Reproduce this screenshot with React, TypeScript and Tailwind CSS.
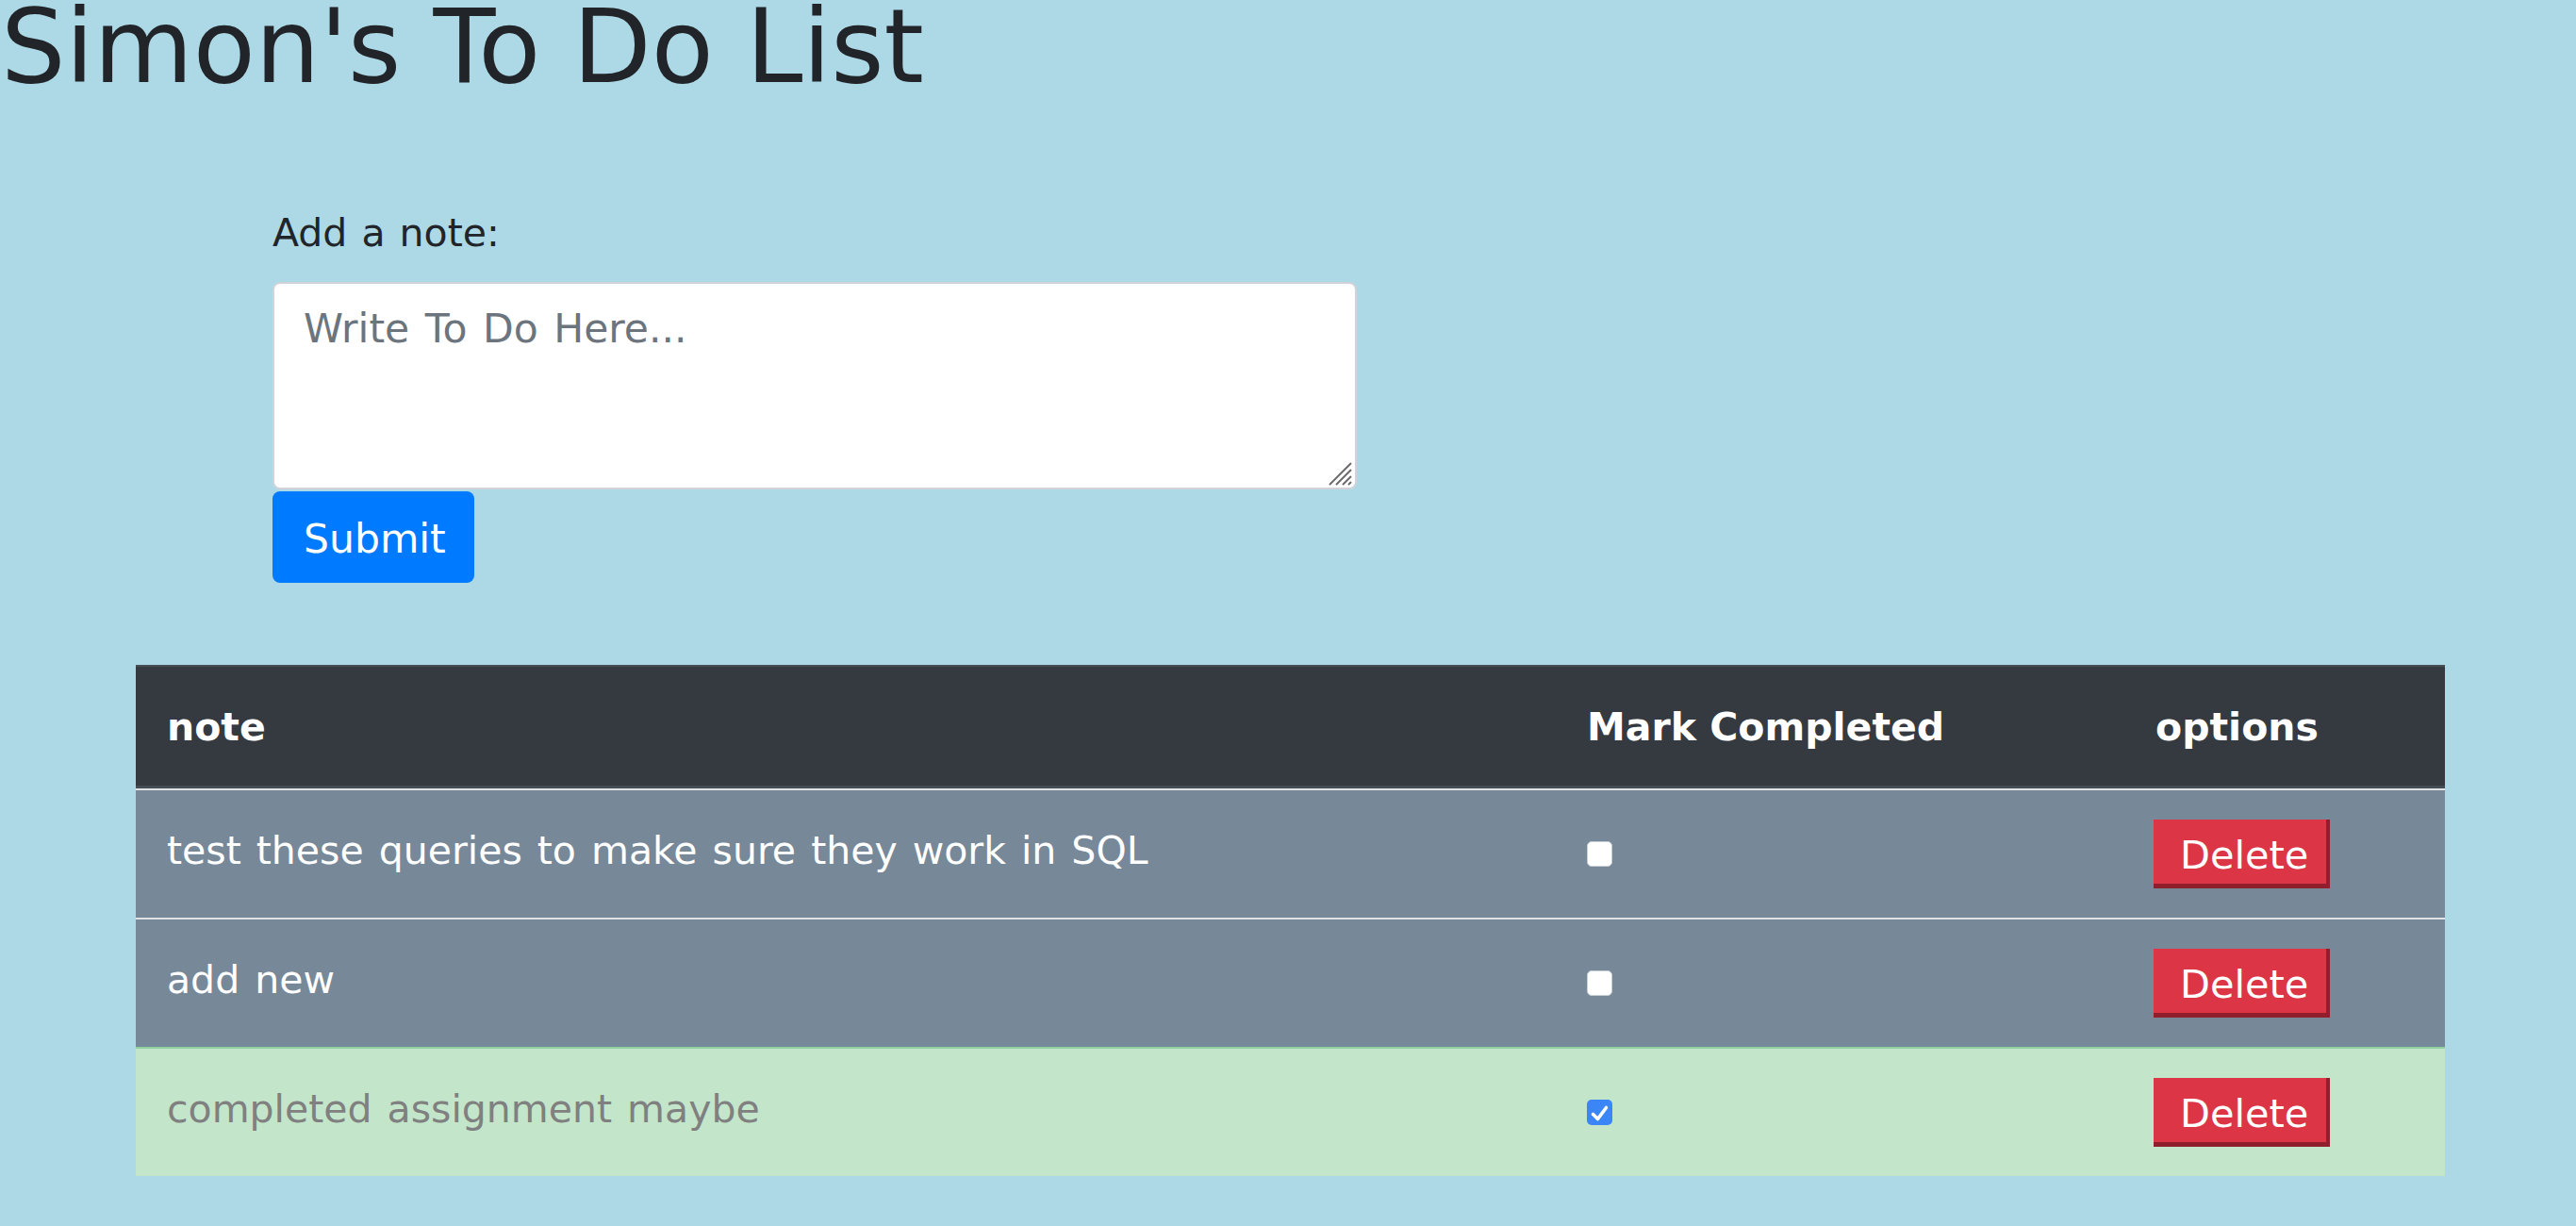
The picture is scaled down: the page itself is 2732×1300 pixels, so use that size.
import { useState } from "react";

interface Todo {
  id: number;
  note: string;
  done: boolean;
}

const FONT = "font-['DejaVu_Sans',sans-serif]";

const INITIAL: Todo[] = [
  { id: 1, note: "test these queries to make sure they work in SQL", done: false },
  { id: 2, note: "add new", done: false },
  { id: 3, note: "completed assignment maybe", done: true },
];

function Check({ checked, onToggle }: { checked: boolean; onToggle: () => void }) {
  return (
    <button
      type="button"
      onClick={onToggle}
      aria-pressed={checked}
      className={
        checked
          ? "flex h-[27px] w-[27px] items-center justify-center rounded-[5px] bg-[#3b86f7]"
          : "flex h-[27px] w-[27px] items-center justify-center rounded-[5px] border border-[#c9ced4] bg-white"
      }
    >
      {checked && (
        <svg width="27" height="27" viewBox="0 0 27 27" fill="none">
          <path
            d="M6.5 15.5 L11.5 20.5 L20.5 8.5"
            stroke="#ffffff"
            strokeWidth="3.6"
            strokeLinecap="round"
            strokeLinejoin="round"
          />
        </svg>
      )}
    </button>
  );
}

function Row({ todo, onToggle }: { todo: Todo; onToggle: () => void }) {
  const rowBg = todo.done
    ? "border-t-2 border-[#8fd19e] bg-[#c3e6cb] text-[#808080]"
    : "border-t-2 border-[#dee2e6] bg-[#778899] text-white";
  return (
    <div className={`grid h-[137px] grid-cols-[1507px_601px_1fr] items-center ${rowBg}`}>
      <div className="px-[33px] pb-[6px] [word-spacing:3px]">{todo.note}</div>
      <div className="px-[32px]">
        <Check checked={todo.done} onToggle={onToggle} />
      </div>
      <div className="px-[32px]">
        <button
          type="button"
          className="block w-[187px] border-t-0 border-l-0 border-r-[4px] border-b-[5px] border-[#8f1f2c] bg-[#dc3545] pt-[13px] pb-[5px] pl-[28px] text-left text-[41.5px] leading-[50px] text-white"
        >
          Delete
        </button>
      </div>
    </div>
  );
}

export default function App() {
  const [todos, setTodos] = useState<Todo[]>(INITIAL);
  const [draft, setDraft] = useState("");

  const toggle = (id: number) =>
    setTodos((list) => list.map((t) => (t.id === id ? { ...t, done: !t.done } : t)));

  return (
    <div className={`h-[1300px] w-full overflow-hidden bg-[#add8e6] text-[41px] leading-[63px] text-[#212529] ${FONT}`}>
      <h1 className="h-[100px] pl-[1px] text-[108px] leading-[99px] font-normal">Simon's To Do List</h1>

      <form className="ml-[289px] mt-[116px] w-[1150px]" onSubmit={(e) => e.preventDefault()}>
        <label className="mb-[20px] block [word-spacing:2px]">Add a note:</label>
        <div className="relative">
          <textarea
            value={draft}
            onChange={(e) => setDraft(e.target.value)}
            placeholder="Write To Do Here..."
            className="block h-[220px] w-full resize-none rounded-[8px] border-2 border-[#d0d4d8] bg-white px-[31px] pt-[16px] text-[42.5px] leading-[63px] text-[#495057] [word-spacing:3px] placeholder:text-[#6c757d] outline-none"
          />
          <svg
            className="absolute right-[4px] bottom-[3px]"
            width="28"
            height="28"
            viewBox="0 0 28 28"
            fill="none"
          >
            <path d="M3 26 L26 3 M10 26 L26 10 M17 26 L26 17 M23 26 L26 23" stroke="#6b6b6b" strokeWidth="2" />
          </svg>
        </div>
        <button
          type="submit"
          className="mt-[2px] block h-[97px] w-[214px] rounded-[8px] bg-[#007bff] pt-[3px] text-left pl-[33px] text-[42.5px] leading-[63px] text-white"
        >
          Submit
        </button>
      </form>

      <div className="mt-[87px] ml-[144px] w-[2449px]">
        <div className="grid h-[133px] grid-cols-[1507px_601px_1fr] items-center border-t-2 border-b-[5px] border-[#454d55] bg-[#343a40] pt-[2px] font-bold text-white">
          <div className="px-[33px]">note</div>
          <div className="px-[32px]">Mark Completed</div>
          <div className="px-[34px]">options</div>
        </div>
        {todos.map((t, i) => (
          <div key={t.id} className={i === 0 ? "-mt-[2px]" : ""}>
            <Row todo={t} onToggle={() => toggle(t.id)} />
          </div>
        ))}
      </div>
    </div>
  );
}
